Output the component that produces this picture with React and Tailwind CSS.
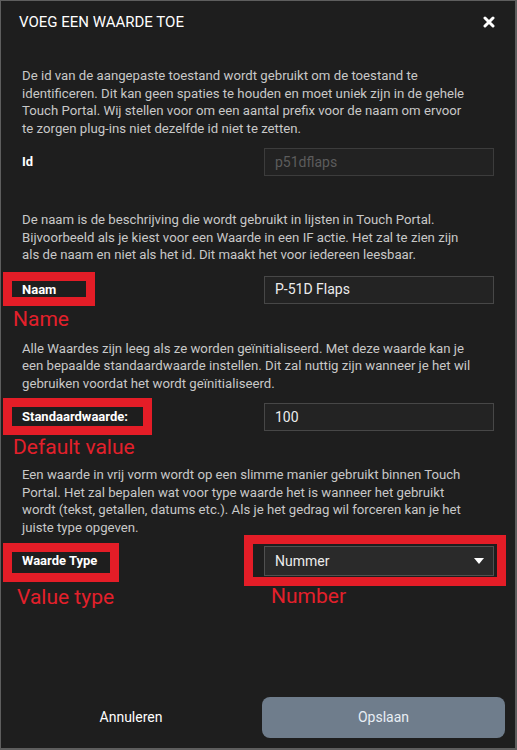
export default function App() {
  const para = "text-[13.2px] leading-[17.5px] text-[#c8c8c8] pl-[21px] pr-[6px]";
  const label = "text-[13px] font-bold text-white";
  const note = "absolute text-[21px] leading-[22px] text-[#e3202b] whitespace-nowrap";
  const box = "absolute border-[9px] border-[#e41d27]";

  return (
    <div
      className="relative w-[517px] h-[750px] flex flex-col bg-[#1e1e1e] border-t border-l border-r-2 border-b-2 border-[#5e5e5e] overflow-hidden"
      style={{ fontFamily: "Roboto, 'Liberation Sans', sans-serif" }}
    >
      {/* header */}
      <div className="h-[42px] flex items-center justify-between pl-[18px] pr-[20px]">
        <span className="text-[15px] text-white">VOEG EEN WAARDE TOE</span>
        <svg width="12" height="12" viewBox="0 0 12 12">
          <path d="M2 2 L10 10 M10 2 L2 10" stroke="white" strokeWidth="3" strokeLinecap="round" />
        </svg>
      </div>

      <p className={`${para} mt-[24px]`}>
        De id van de aangepaste toestand wordt gebruikt om de toestand te<br />
        identificeren. Dit kan geen spaties te houden en moet uniek zijn in de gehele<br />
        Touch Portal. Wij stellen voor om een aantal prefix voor de naam om ervoor<br />
        te zorgen plug-ins niet dezelfde id niet te zetten.
      </p>

      <div className="relative mt-[11px] flex items-center justify-between pl-[21px] pr-[21px]">
        <span className={label}>Id</span>
        <div className="w-[230px] h-[28px] flex items-center pl-[10px] bg-[#222222] border border-[#3c3c3c] text-[14px] text-[#5c5c5c]">
          p51dflaps
        </div>
      </div>

      <p className={`${para} mt-[35px]`}>
        De naam is de beschrijving die wordt gebruikt in lijsten in Touch Portal.<br />
        Bijvoorbeeld als je kiest voor een Waarde in een IF actie. Het zal te zien zijn<br />
        als de naam en niet als het id. Dit maakt het voor iedereen leesbaar.
      </p>

      <div className="relative mt-[12px] flex items-center justify-between pl-[21px] pr-[21px]">
        <span className={label}>Naam</span>
        <div className="w-[230px] h-[28px] flex items-center pl-[10px] bg-[#232323] border border-[#474747] text-[14px] text-[#ececec]">
          P-51D Flaps
        </div>
        <div className={`${box} left-[2px] top-[-4px] w-[92px] h-[34px]`} />
        <span className={`${note} left-[12px] top-[32px]`}>Name</span>
      </div>

      <p className={`${para} mt-[36px]`}>
        Alle Waardes zijn leeg als ze worden geïnitialiseerd. Met deze waarde kan je<br />
        een bepaalde standaardwaarde instellen. Dit zal nuttig zijn wanneer je het wil<br />
        gebruiken voordat het wordt geïnitialiseerd.
      </p>

      <div className="relative mt-[11px] flex items-center justify-between pl-[21px] pr-[21px]">
        <span className={label}>Standaardwaarde:</span>
        <div className="w-[230px] h-[28px] flex items-center pl-[10px] bg-[#232323] border border-[#474747] text-[14px] text-[#ececec]">
          100
        </div>
        <div className={`${box} left-[2px] top-[-5px] w-[149px] h-[37px]`} />
        <span className={`${note} left-[12px] top-[33px]`}>Default value</span>
      </div>

      <p className={`${para} mt-[35px]`}>
        Een waarde in vrij vorm wordt op een slimme manier gebruikt binnen Touch<br />
        Portal. Het zal bepalen wat voor type waarde het is wanneer het gebruikt<br />
        wordt (tekst, getallen, datums etc.). Als je het gedrag wil forceren kan je het<br />
        juiste type opgeven.
      </p>

      <div className="relative mt-[10px] flex items-center justify-between pl-[21px] pr-[21px]">
        <span className={label}>Waarde Type</span>
        <div className="w-[230px] h-[30px] flex items-center justify-between pl-[10px] pr-[9px] bg-[#2a2a2a] border border-[#505050] text-[14px] text-[#ececec]">
          <span>Nummer</span>
          <svg width="10" height="6" viewBox="0 0 10 6">
            <path d="M0 0 L10 0 L5 6 Z" fill="white" />
          </svg>
        </div>
        <div className={`${box} left-[2px] top-[-3px] w-[116px] h-[39px]`} />
        <div className={`${box} left-[243px] top-[-11px] w-[262px] h-[51px]`} />
        <span className={`${note} left-[16px] top-[40px]`}>Value type</span>
        <span className={`${note} left-[270px] top-[39px]`}>Number</span>
      </div>

      {/* footer */}
      <div className="mt-auto mb-[10px] flex items-center pl-[21px] pr-[10px] gap-[22px]">
        <div className="flex-1 text-center text-[14px] text-white">Annuleren</div>
        <button className="w-[243px] h-[41px] rounded-[8px] bg-[#6f7d8c] text-[14px] text-[#e8eef4]">
          Opslaan
        </button>
      </div>
    </div>
  );
}
